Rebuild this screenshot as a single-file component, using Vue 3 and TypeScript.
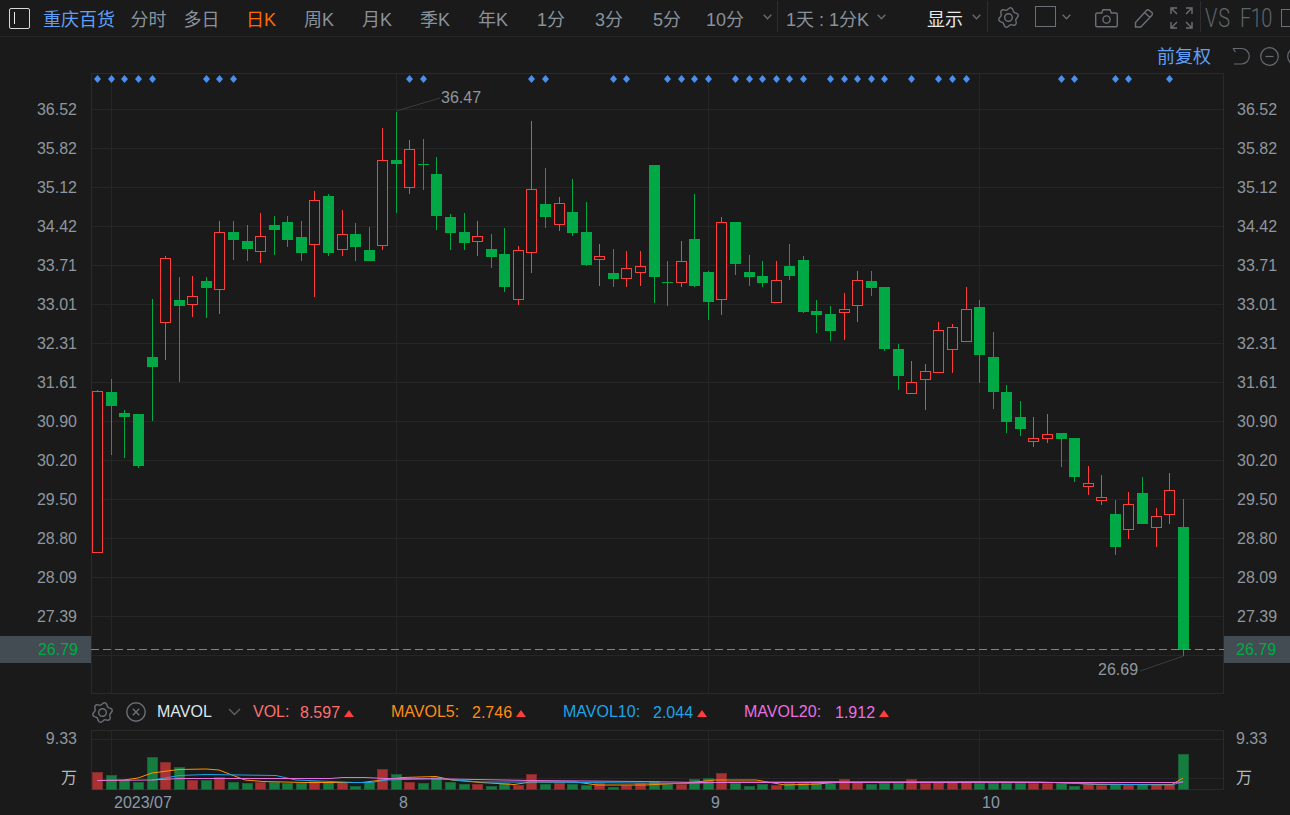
<script setup lang="ts">
type Candle = [number, number, number, number, number, 0 | 1]

// x, high, body top, body bottom, low, rising (hollow red)
const candles: Candle[] = [
  [97,390,391,553,553,1],[111,379,392,406,455,0],[124,410,413,417,458,0],[138,414,414,466,468,0],
  [152,299,357,367,421,0],[165,256,258,323,360,1],[179,277,300,306,382,0],[192,276,296,305,317,1],
  [206,277,281,288,318,0],[219,221,232,290,314,1],[233,221,232,240,260,0],[247,225,241,249,261,0],
  [260,213,236,252,263,1],[274,216,225,230,255,0],[287,216,222,240,247,0],[301,221,237,253,261,0],
  [314,191,200,245,297,1],[328,194,196,253,256,0],[342,210,234,250,256,1],[355,223,234,247,261,0],
  [369,227,250,261,261,0],[382,128,160,246,250,1],[396,112,160,164,213,0],[409,140,149,188,194,1],
  [423,139,164,165,190,0],[436,157,174,216,230,0],[450,214,217,233,250,0],[464,213,232,243,250,0],
  [477,221,236,242,256,1],[491,234,249,257,268,0],[504,228,254,287,292,0],[518,246,250,300,305,1],
  [531,121,189,253,273,1],[545,168,204,217,228,0],[559,197,203,225,231,1],[572,179,212,233,236,0],
  [586,202,232,265,266,0],[599,244,256,260,286,1],[613,249,273,279,287,0],[626,251,268,279,287,1],
  [640,251,266,273,286,1],[654,165,165,277,303,0],[667,261,282,283,306,0],[681,241,261,283,287,1],
  [694,194,239,286,287,0],[708,271,272,302,320,0],[721,217,222,300,315,1],[735,222,222,264,275,0],
  [749,255,272,277,286,0],[762,261,276,283,287,0],[776,261,280,303,303,1],[789,244,266,276,280,0],
  [803,256,260,312,313,0],[816,300,311,315,333,0],[830,306,314,331,341,0],[844,293,309,313,340,1],
  [857,271,280,306,322,1],[871,271,281,288,296,0],[884,287,287,349,351,0],[898,344,349,376,390,0],
  [911,361,382,394,394,1],[925,364,371,380,410,1],[938,322,330,373,373,1],[952,324,327,350,373,1],
  [966,287,309,342,342,1],[979,300,307,355,383,0],[993,332,357,392,409,0],[1006,385,392,422,433,0],
  [1020,401,417,429,436,0],[1033,417,438,442,447,1],[1047,414,434,439,443,1],[1061,433,433,439,467,0],
  [1074,438,438,477,482,0],[1088,466,483,487,495,1],[1101,475,497,501,505,1],[1115,500,514,547,555,0],
  [1128,492,504,530,539,1],[1142,477,493,524,524,0],[1156,508,516,528,547,1],[1169,473,490,515,524,1],
  [1183,499,527,650,656,0],
]

const volumeTops: number[] = [
  772,775,780,782,757,762,767,780,780,777,782,783,782,782,783,783,781,782,782,786,782,769,774,782,783,777,782,
  784,784,786,783,785,774,784,783,784,785,783,787,785,783,781,784,784,779,778,773,783,786,784,785,783,783,783,
  783,779,782,784,783,783,779,783,782,782,782,783,783,783,783,783,783,783,786,784,785,784,784,784,784,784,754,
]

const bars = candles.map((c, i) => ({ x: c[0], top: volumeTops[i], up: c[5] === 1 }))

const hGrid = Array.from({ length: 15 }, (_, i) => 109 + 39 * i)
const vGrid = [111, 396, 708, 979]
const markerIdx = [0,1,2,3,4,8,9,10,23,24,32,33,38,39,42,43,44,45,47,48,49,50,51,52,54,55,56,57,58,60,62,63,64,71,72,75,76,79]
const markers = markerIdx.map((i) => candles[i][0] + 0.5)
const labels = ['36.52','35.82','35.12','34.42','33.71','33.01','32.31','31.61','30.90','30.20','29.50','28.80','28.09','27.39']

const orangeLine = '97,780.5 124,780 138,778 152,773 179,769.5 206,769 219,770 245,780 263,781.5 305,782.5 362,782.5 403,777.5 436,776.5 452,780 481,782.5 514,784.5 531,782 576,782 597,785 645,785 686,783 715,780 756,780 785,785 818,784 838,782 933,782 974,782 1060,782.5 1098,784.5 1172,784.5 1183,778'
const blueLine = '152,780 165,778 179,775.5 206,774.5 276,775.5 296,780 354,782.5 370,782.5 387,780 436,778.5 481,782 535,782 634,783 686,783.5 730,782 800,782 830,781.5 860,782 940,782 974,781.5 1040,782 1090,784 1172,785 1183,781.5'
const pinkLine = '97,780.5 152,780 179,778.5 200,778.5 330,778.5 343,777.5 365,777.5 385,778.5 450,779 530,780.5 640,781.5 700,782.5 830,782.5 1000,782.5 1172,782.5 1183,782'

function gearPath(size: number): string {
  const c = size / 2
  const R = size / 2 - 1.7
  const pts: string[] = []
  for (let i = 0; i < 72; i++) {
    const a = (i / 72) * Math.PI * 2
    const r = R + 1.2 * Math.cos(6 * a + Math.PI / 2)
    pts.push(`${(c + r * Math.cos(a)).toFixed(2)} ${(c + r * Math.sin(a)).toFixed(2)}`)
  }
  return `M${pts.join('L')}Z`
}
const gear = gearPath(21)
</script>

<template>
  <div class="page">
    <header class="toolbar">
      <span class="logo"><i></i></span>
      <span class="name">重庆百货</span>
      <span class="tab narrow">分时</span>
      <span class="tab narrow">多日</span>
      <span class="tab first active">日K</span>
      <span class="tab">周K</span>
      <span class="tab">月K</span>
      <span class="tab">季K</span>
      <span class="tab">年K</span>
      <span class="tab">1分</span>
      <span class="tab">3分</span>
      <span class="tab">5分</span>
      <span class="tab">10分</span>
      <svg class="chev c1" width="9" height="6" viewBox="0 0 9 6"><path d="M.7.7 4.5 4.7 8.3.7" /></svg>
      <span class="divider d1"></span>
      <span class="period">1天 : 1分K</span>
      <svg class="chev c1" width="9" height="6" viewBox="0 0 9 6"><path d="M.7.7 4.5 4.7 8.3.7" /></svg>
      <span class="display">显示</span>
      <svg class="chev c1" width="9" height="6" viewBox="0 0 9 6"><path d="M.7.7 4.5 4.7 8.3.7" /></svg>
      <span class="divider d2"></span>
      <svg class="icon i-gear" width="21" height="21" viewBox="0 0 21 21"><path :d="gear" /><circle cx="10.5" cy="10.5" r="3.8" /></svg>
      <span class="square"></span>
      <svg class="chev c2" width="9" height="6" viewBox="0 0 9 6"><path d="M.7.7 4.5 4.7 8.3.7" /></svg>
      <svg class="icon i-cam" width="23" height="20" viewBox="0 0 23 20"><path d="M.7 6.5A1.5 1.5 0 0 1 2.2 5H6.7L8 1.7H15L16.3 5H20.8A1.5 1.5 0 0 1 22.3 6.5V17.3A1.5 1.5 0 0 1 20.8 18.8H2.2A1.5 1.5 0 0 1 .7 17.3Z" /><circle cx="11.5" cy="11.5" r="3.6" /></svg>
      <svg class="icon i-pen" width="20" height="20" viewBox="0 0 20 20"><path d="M1.5 14.5 12.6 2.3a1.8 1.8 0 0 1 2.6-.1l2.6 2.4a1.8 1.8 0 0 1 .1 2.6L6.8 19H1.5ZM10.5 4.6 16 9.6" /></svg>
      <svg class="icon i-full" width="23" height="22" viewBox="0 0 23 22"><path d="M1 7V1H7M16 1H22V7M22 15V21H16M7 21H1V15M2 2 7 7M21 2 16 7M21 20 16 15M2 20 7 15" /></svg>
      <span class="divider d3"></span>
      <span class="big vs">VS</span>
      <span class="big f10">F10</span>
      <span class="square clipped"></span>
    </header>

    <div class="subbar">
      <span class="adjust">前复权</span>
      <svg class="icon undo" width="19" height="18" viewBox="0 0 19 18"><path d="M1 1.5H9.5A7.7 7.7 0 0 1 9.5 17H2M1 1.5 3.5 5" /></svg>
      <svg class="icon circ" width="19" height="19" viewBox="0 0 19 19"><circle cx="9.5" cy="9.5" r="8.8" /><path d="M5.5 9.5H13.5" /></svg>
      <svg class="icon circ" width="19" height="19" viewBox="0 0 19 19"><circle cx="9.5" cy="9.5" r="8.8" /><path d="M5.5 9.5H13.5M9.5 5.5V13.5" /></svg>
    </div>

    <section class="main-panel">
      <div class="axis axis-left">
        <span v-for="l in labels" :key="l" class="tick">{{ l }}</span>
      </div>
      <svg class="plot" width="1133" height="621" viewBox="91 73 1133 621" shape-rendering="crispEdges">
        <line v-for="y in hGrid" :key="'h' + y" x1="91" x2="1224" :y1="y + 0.5" :y2="y + 0.5" class="grid" />
        <line v-for="x in vGrid" :key="'v' + x" :x1="x + 0.5" :x2="x + 0.5" y1="73" y2="693" class="grid" />
        <rect x="91.5" y="73.5" width="1132" height="620" class="frame" />
        <polygon v-for="(m, i) in markers" :key="'m' + i" :points="`${m},75 ${m + 3.5},79 ${m},83 ${m - 3.5},79`" class="marker" shape-rendering="auto" />
        <g v-for="c in candles" :key="'c' + c[0]">
          <rect :x="c[0]" :y="c[1]" width="1" :height="c[4] - c[1]" :class="c[5] ? 'f-up' : 'f-down'" />
          <rect v-if="c[5]" :x="c[0] - 4.5" :y="c[2] + 0.5" width="10" :height="c[3] - c[2] - 1" class="hollow" />
          <rect v-else :x="c[0] - 5" :y="c[2]" width="11" :height="c[3] - c[2]" class="f-down" />
        </g>
        <line x1="91" x2="1224" y1="649.5" y2="649.5" class="last" />
        <path d="M396.5 111 440 98M1183.5 656 1140 671" class="leader" shape-rendering="auto" />
      </svg>
      <div class="axis axis-right">
        <span v-for="l in labels" :key="l" class="tick">{{ l }}</span>
      </div>
      <span class="price-tag tag-left">26.79</span>
      <span class="price-tag tag-right">26.79</span>
      <span class="note note-high">36.47</span>
      <span class="note note-low">26.69</span>
    </section>

    <div class="legend">
      <svg class="icon l-gear" width="21" height="21" viewBox="0 0 21 21"><path :d="gear" /><circle cx="10.5" cy="10.5" r="3.8" /></svg>
      <svg class="icon l-close" width="20" height="20" viewBox="0 0 20 20"><circle cx="10" cy="10" r="9.2" /><path d="M6.8 6.8 13.2 13.2M13.2 6.8 6.8 13.2" /></svg>
      <span class="ind">MAVOL</span>
      <svg class="chev l-chev" width="13" height="8" viewBox="0 0 13 8"><path d="M1 1 6.5 6.5 12 1" /></svg>
      <span class="k vol w36">VOL:</span><span class="v vol">8.597</span><i class="tri"></i>
      <span class="k ma5 w68 s1">MAVOL5:</span><span class="v ma5">2.746</span><i class="tri"></i>
      <span class="k ma10 w78 s1">MAVOL10:</span><span class="v ma10">2.044</span><i class="tri"></i>
      <span class="k ma20 w78 s1">MAVOL20:</span><span class="v ma20">1.912</span><i class="tri"></i>
    </div>

    <section class="vol-panel">
      <div class="vol-axis left">
        <span>9.33</span>
        <span class="wan">万</span>
      </div>
      <svg class="plot" width="1133" height="60" viewBox="91 730 1133 60" shape-rendering="crispEdges">
        <line x1="91" x2="1224" y1="739.5" y2="739.5" class="grid" />
        <line x1="91" x2="1224" y1="778.5" y2="778.5" class="grid" />
        <line v-for="x in vGrid" :key="'vv' + x" :x1="x + 0.5" :x2="x + 0.5" y1="730" y2="790" class="grid" />
        <rect x="91.5" y="730.5" width="1132" height="59" class="frame" />
        <rect v-for="b in bars" :key="'b' + b.x" :x="b.x - 4.5" :y="b.top + 0.5" width="10" :height="789 - b.top" :class="b.up ? 'bar-up' : 'bar-down'" />
        <g shape-rendering="auto">
          <polyline :points="orangeLine" class="ma-line l-orange" />
          <polyline :points="blueLine" class="ma-line l-blue" />
          <polyline :points="pinkLine" class="ma-line l-pink" />
        </g>
      </svg>
      <div class="vol-axis right">
        <span>9.33</span>
        <span class="wan">万</span>
      </div>
    </section>

    <div class="dates">
      <span class="d-a">2023/07</span>
      <span class="d-b">8</span>
      <span class="d-c">9</span>
      <span class="d-d">10</span>
    </div>
  </div>
</template>

<style>
html, body { margin: 0; background: #1a1a1a; overflow: hidden; }
</style>

<style scoped>
.page {
  position: relative;
  width: 1290px;
  height: 815px;
  overflow: hidden;
  background: #1a1a1a;
  color: #8f969d;
  font-family: "Liberation Sans", "Noto Sans CJK SC", sans-serif;
  font-size: 16px;
}
.toolbar {
  display: flex;
  align-items: center;
  box-sizing: border-box;
  height: 37px;
  padding-left: 9px;
  border-bottom: 1px solid #272727;
  font-size: 18px;
  white-space: nowrap;
}
.toolbar > * { flex: none; }
.logo {
  display: flex;
  align-items: center;
  box-sizing: border-box;
  width: 21px;
  height: 21px;
  padding-left: 4px;
  border: 1px solid #d8d8d8;
  border-radius: 2px;
}
.logo i { display: block; width: 1px; height: 12px; background: #e8e8e8; }
.name { width: 72px; margin-left: 13px; margin-right: 7px; color: #5f9ff5; }
.tab { width: 58px; text-align: center; color: #89929b; }
.tab.narrow { width: 53px; }
.tab.first { margin-left: 4px; }
.tab.active { color: #ff6a00; }
.chev { flex: none; fill: none; stroke: #666b71; stroke-width: 1.4; }
.c1 { margin-left: 9px; margin-top: -3px; }
.c2 { margin-left: 6px; margin-top: -3px; }
.divider { width: 1px; height: 31px; margin-top: -3px; background: #2e2e2e; }
.d1 { margin-left: 5px; }
.d2 { margin-left: 6px; }
.d3 { margin-left: 7px; }
.period { width: 82px; margin-left: 8px; color: #89929b; }
.display { width: 36px; margin-left: 41px; color: #e8e8e8; }
.icon { flex: none; fill: none; stroke: #6b7076; stroke-width: 1.4; }
.i-gear { margin-left: 10px; margin-top: -2px; }
.square {
  box-sizing: border-box;
  width: 21px;
  height: 21px;
  margin-left: 16px;
  margin-top: -3px;
  border: 1px solid #6b7076;
}
.i-cam { margin-left: 24px; margin-top: -1px; }
.i-pen { margin-left: 16px; margin-top: -1px; }
.i-full { margin-left: 16px; }
.big {
  display: inline-block;
  font-family: Roboto, "Liberation Sans", sans-serif;
  font-weight: 300;
  font-size: 20px;
  line-height: 24px;
  color: #5f656c;
  transform: scaleY(1.25);
  margin-top: -1px;
}
.vs { width: 27px; margin-left: 4px; letter-spacing: 1px; }
.f10 { width: 32px; margin-left: 8px; letter-spacing: -0.5px; }
.square.clipped { margin-left: 9px; height: 18px; margin-top: 0; }

.subbar {
  display: flex;
  align-items: center;
  height: 36px;
  padding-left: 1157px;
  white-space: nowrap;
}
.adjust { flex: none; width: 54px; font-size: 18px; color: #5f9ff5; }
.undo { margin-left: 21px; }
.circ { margin-left: 9px; }
.undo, .circ { stroke: #666b71; stroke-width: 1.2; margin-top: 2px; }
.circ + .circ { margin-left: 8px; }

.main-panel { position: relative; display: flex; height: 621px; }
.axis {
  display: flex;
  flex-direction: column;
  flex: none;
  box-sizing: border-box;
  padding-top: 28px;
}
.axis-left { width: 91px; padding-right: 14px; text-align: right; }
.axis-right { width: 66px; padding-left: 13px; }
.tick { display: block; flex: none; height: 39px; line-height: 18px; }
.plot { display: block; flex: none; }
.grid { stroke: #262626; stroke-width: 1; }
.frame { fill: none; stroke: #2a2a2a; stroke-width: 1; }
.marker { fill: #4a8fee; }
.f-up { fill: #ff3d3d; }
.f-down { fill: #00a945; }
.hollow { fill: #1a1a1a; stroke: #ff3d3d; stroke-width: 1; }
.last { stroke: #c9702b; stroke-width: 1; stroke-dasharray: 8 4; }
.leader { fill: none; stroke: #3c3c3c; stroke-width: 1; }
.price-tag {
  position: absolute;
  top: 563px;
  box-sizing: border-box;
  height: 27px;
  line-height: 27px;
  background: #434c53;
  color: #00a945;
}
.tag-left { left: 0; width: 91px; padding-right: 13px; text-align: right; }
.tag-right { left: 1224px; width: 66px; padding-left: 12px; }
.note { position: absolute; line-height: 18px; }
.note-high { left: 441px; top: 16px; }
.note-low { left: 1098px; top: 588px; }

.legend {
  display: flex;
  align-items: center;
  height: 36px;
  padding-left: 92px;
  white-space: nowrap;
}
.legend > * { flex: none; }
.l-close { margin-left: 13px; }
.ind { width: 55px; margin-left: 11px; color: #dfe6ee; }
.l-chev { margin-left: 16px; stroke: #5d6268; }
.k { display: block; }
.w36 { width: 36px; margin-left: 12px; }
.w68 { width: 68px; }
.w78 { width: 78px; }
.s1 { margin-left: 37px; }
.v { width: 40px; margin-left: 12px; margin-top: 2px; }
.v.vol { margin-left: 11px; }
.v.ma5, .v.ma20 { margin-left: 13px; }
.vol { color: #ff6f6f; }
.ma5 { color: #ff8c14; }
.ma10 { color: #1ba4ea; }
.ma20 { color: #e86fe0; }
.tri {
  display: block;
  width: 0;
  height: 0;
  margin-left: 4px;
  margin-top: 2px;
  border-left: 5px solid transparent;
  border-right: 5px solid transparent;
  border-bottom: 7px solid #ff3d3d;
}

.vol-panel { display: flex; height: 60px; }
.vol-axis { display: flex; flex-direction: column; flex: none; box-sizing: border-box; line-height: 18px; }
.vol-axis.left { width: 91px; padding-right: 14px; text-align: right; }
.vol-axis.right { width: 66px; padding-left: 12px; }
.wan { margin-top: 21px; color: #b4b8bc; }
.bar-up { fill: #a83232; stroke: #7d2c2c; stroke-width: 1; }
.bar-down { fill: #167d40; stroke: #1a5f38; stroke-width: 1; }
.ma-line { fill: none; stroke-width: 1; }
.l-orange { stroke: #ff9000; }
.l-blue { stroke: #1ba4ea; }
.l-pink { stroke: #e86fe0; }

.dates {
  display: flex;
  align-items: center;
  height: 25px;
  padding-left: 114px;
  color: #8a99aa;
  white-space: nowrap;
}
.d-a { width: 58px; }
.d-b { width: 9px; margin-left: 227px; }
.d-c { width: 9px; margin-left: 303px; }
.d-d { margin-left: 262px; }
</style>
